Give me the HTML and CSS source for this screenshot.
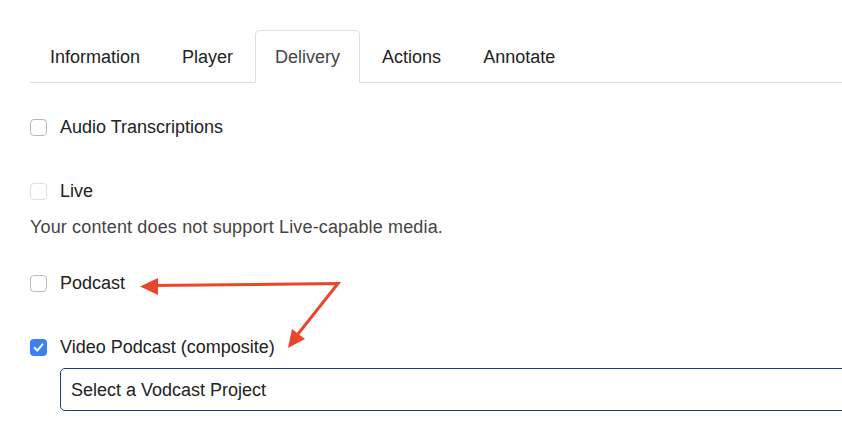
FILE: index.html
```html
<!DOCTYPE html>
<html lang="en">
<head>
    <meta charset="UTF-8">
    <meta name="viewport" content="width=device-width, initial-scale=1.0">
    <title>Delivery</title>
    <link rel="stylesheet" href="styles.css">
</head>
<body>
    <div class="page">
        <ul class="tabs">
            <li class="tab">Information</li>
            <li class="tab">Player</li>
            <li class="tab active">Delivery</li>
            <li class="tab">Actions</li>
            <li class="tab">Annotate</li>
        </ul>

        <div class="group">
            <label class="option"><span class="box"></span>Audio Transcriptions</label>
        </div>

        <div class="group">
            <label class="option"><span class="box disabled"></span>Live</label>
            <p class="help">Your content does not support Live-capable media.</p>
        </div>

        <div class="group">
            <label class="option"><span class="box"></span>Podcast</label>
        </div>

        <div class="group">
            <label class="option">
                <span class="box checked">
                    <svg width="17" height="17" viewBox="0 0 17 17"><path d="M4.5 8.8 L7.3 11.6 L12.5 5.4" fill="none" stroke="#fff" stroke-width="2" stroke-linecap="round" stroke-linejoin="round"/></svg>
                </span>Video Podcast (composite)
            </label>
            <div class="select">Select a Vodcast Project</div>
        </div>
    </div>

    <svg class="arrows" width="842" height="423" viewBox="0 0 842 423">
        <path d="M152 285.5 L338 283.5 L298 334" fill="none" stroke="#e8472b" stroke-width="3" stroke-linejoin="miter"/>
        <polygon points="140,286.5 158,278 158,295" fill="#e8472b"/>
        <polygon points="288,348 292,329 305,339" fill="#e8472b"/>
    </svg>
</body>
</html>
```

FILE: styles.css
```css
body { margin: 0; font-family: "Liberation Sans", Arial, sans-serif; font-size: 18px; color: #222; background: #fff; overflow: hidden; }
.page { padding: 30px 0 0 30px; }
.tabs { display: flex; list-style: none; margin: 0; padding: 0; border-bottom: 1px solid #ddd; }
.tab { height: 50px; line-height: 50px; padding: 1px 19px 0; margin-right: 2px; margin-bottom: -1px; border: 1px solid transparent; border-radius: 5px 5px 0 0; color: #222; }
.tab.active { border-color: #ddd; border-bottom-color: #fff; background: #fff; color: #444; }
.group { padding-top: 32px; }
.group + .group { padding-top: 40px; }
.option { display: flex; align-items: center; gap: 13px; height: 24px; line-height: 24px; }
.box { width: 15px; height: 15px; border: 1px solid #b8b8b8; border-radius: 4px; background: #fff; display: flex; }
.box.disabled { border-color: #ddd; }
.box.checked { width: 17px; height: 17px; border: none; background: #3d7ff0; }
.help { margin: 12px 0 -8px; line-height: 24px; color: #444; letter-spacing: 0.15px; }
.select { margin: 9px 0 0 30px; width: 820px; height: 41px; line-height: 42px; padding: 0 10px; border: 1.5px solid #1d3c8f; border-radius: 5px; color: #222; }
.arrows { position: absolute; left: 0; top: 0; pointer-events: none; }
```
